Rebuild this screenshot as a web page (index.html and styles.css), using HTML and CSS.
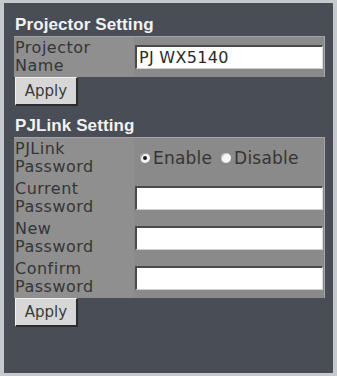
FILE: index.html
```html
<!DOCTYPE html>
<html>
<head>
<meta charset="utf-8">
<link rel="stylesheet" href="styles.css">
</head>
<body>
<div class="panel">
  <div class="heading">Projector Setting</div>
  <div class="table">
    <div class="row">
      <div class="label">Projector<br>Name</div>
      <div class="field"><input class="text" type="text" value="PJ WX5140"></div>
    </div>
  </div>
  <button class="apply">Apply</button>

  <div class="heading heading-2">PJLink Setting</div>
  <div class="table">
    <div class="row">
      <div class="label">PJLink<br>Password</div>
      <div class="field radios">
        <span class="radio checked"></span><span class="opt">Enable</span>
        <span class="radio second"></span><span class="opt">Disable</span>
      </div>
    </div>
    <div class="row">
      <div class="label">Current<br>Password</div>
      <div class="field"><input class="text" type="password"></div>
    </div>
    <div class="row">
      <div class="label">New<br>Password</div>
      <div class="field"><input class="text" type="password"></div>
    </div>
    <div class="row">
      <div class="label">Confirm<br>Password</div>
      <div class="field"><input class="text" type="password"></div>
    </div>
  </div>
  <button class="apply">Apply</button>
</div>
</body>
</html>
```

FILE: styles.css
```css
html, body {
  margin: 0;
  padding: 0;
}
body {
  background: #c6cacf;
  width: 337px;
  height: 376px;
  overflow: hidden;
}
.panel {
  margin: 3px 4px 0 4px;
  height: 370px;
  box-sizing: border-box;
  background: #484d56;
  padding: 12px 0 0 10px;
  display: flex;
  flex-direction: column;
  align-items: flex-start;
}
.heading {
  font-family: "Liberation Sans", Arial, sans-serif;
  font-weight: bold;
  font-size: 17px;
  line-height: 20px;
  height: 20px;
  color: #f2f2f2;
  padding-left: 1px;
  margin-bottom: 1px;
  letter-spacing: 0.1px;
}
.heading-2 {
  margin-top: 10px;
}
.table {
  width: 311px;
  background: #8d8d8d;
  border-top: 1px solid #a3a3a3;
  border-right: 1px solid #a6a6a6;
  box-sizing: border-box;
}
.row {
  display: grid;
  grid-template-columns: 120px 1fr;
  height: 40px;
}
.label {
  font-family: "DejaVu Sans", Verdana, sans-serif;
  font-size: 16px;
  line-height: 18px;
  letter-spacing: 0.5px;
  color: #353535;
  padding: 2px 0 0 1px;
  background: #8f8f8f;
}
.field {
  display: flex;
  align-items: center;
  padding-left: 1px;
  background: #8a8a8a;
}
.text {
  box-sizing: border-box;
  width: 188px;
  height: 24px;
  margin: 0;
  padding: 0 0 0 2px;
  background: #fff;
  border-style: solid;
  border-width: 2px 1px 1px 2px;
  border-color: #4a4a4a #dcdcdc #cfcfcf #4a4a4a;
  font-family: "DejaVu Sans", Verdana, sans-serif;
  font-size: 16px;
  letter-spacing: 0.3px;
  color: #2a2a2a;
  outline: none;
}
.radios {
  font-family: "DejaVu Sans", Verdana, sans-serif;
  font-size: 17px;
  color: #353535;
  padding-left: 6px;
}
.radio {
  display: inline-block;
  width: 10px;
  height: 10px;
  border-radius: 50%;
  background: #f4f4f4;
  box-shadow: inset 1px 1px 0 #9a9a9a;
  position: relative;
  margin-right: 3px;
  flex: none;
}
.radio.second {
  margin-left: 9px;
  background: #f8f8f8;
  box-shadow: inset 1px 1px 0 #c0c0c0;
}
.radio.checked::after {
  content: "";
  position: absolute;
  left: 3px;
  top: 3px;
  width: 4px;
  height: 4px;
  border-radius: 50%;
  background: #1c1c1c;
}
.opt {
  line-height: 20px;
  letter-spacing: 0.2px;
}
.apply {
  margin: 0 0 0 1px;
  width: 63px;
  height: 29px;
  box-sizing: border-box;
  background: #d7d7d7;
  border-style: solid;
  border-width: 1px 2px 2px 1px;
  border-color: #f2f2f2 #2c2c2c #2c2c2c #f2f2f2;
  font-family: "DejaVu Sans", Verdana, sans-serif;
  font-size: 15px;
  color: #3a3a3a;
  padding: 0;
}
```
